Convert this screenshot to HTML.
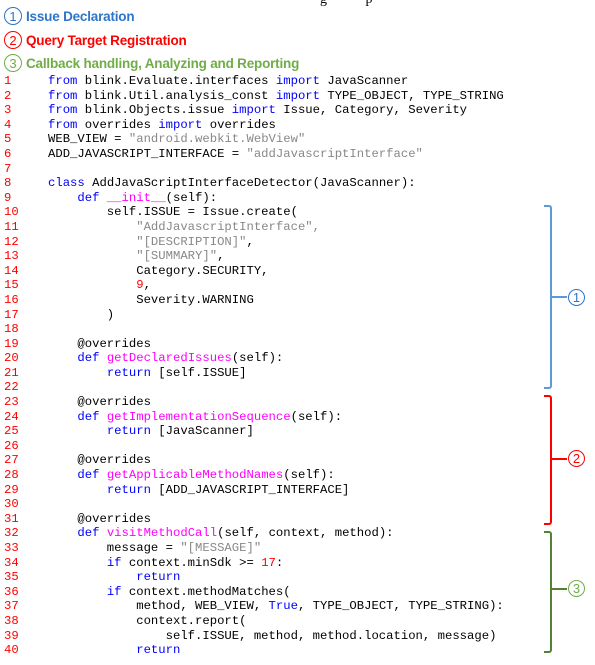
<!DOCTYPE html>
<html><head><style>
body{margin:0;width:595px;height:665px;background:#fff;position:relative;overflow:hidden}
.h{position:absolute;left:4px;height:20px;display:flex;align-items:center;font:bold 13.5px "Liberation Sans",sans-serif;white-space:nowrap;letter-spacing:-0.2px}
.c{display:flex;align-items:center;justify-content:center;width:18px;height:18px;border:1.5px solid;border-radius:50%;font-size:13px;font-weight:normal;box-sizing:border-box;margin-right:4px;letter-spacing:0}
pre{position:absolute;left:0;top:74px;margin:0;font:12.25px/14.6px "Liberation Mono",monospace;color:#000}
.n{color:#f00;display:inline-block;width:48px;padding-left:4px;box-sizing:border-box}
.k{color:#00f}.f{color:#f0f}.s{color:#888}.r{color:#f00}
.b{position:absolute;width:6px;border:2px solid;border-left:none;border-radius:0 3px 3px 0}
.t{position:absolute;height:2px;width:16px}
.cc{position:absolute;width:17px;height:17px;border:1.5px solid;border-radius:50%;display:flex;align-items:center;justify-content:center;font:13px "Liberation Sans",sans-serif;box-sizing:border-box}
</style></head><body>
<div style="position:absolute;left:320px;top:-8px;font:14px 'Liberation Serif',serif">g&nbsp;&nbsp;&nbsp;&nbsp;&nbsp;&nbsp;&nbsp;&nbsp;&nbsp;&nbsp;&nbsp;p</div>
<div class="h" style="top:6px;color:#2e75c8"><span class="c">1</span>Issue Declaration</div>
<div class="h" style="top:30px;color:#f00"><span class="c">2</span>Query Target Registration</div>
<div class="h" style="top:53px;color:#70ad47"><span class="c">3</span>Callback handling, Analyzing and Reporting</div>
<pre><span class="n">1</span><span class="k">from</span> blink.Evaluate.interfaces <span class="k">import</span> JavaScanner
<span class="n">2</span><span class="k">from</span> blink.Util.analysis_const <span class="k">import</span> TYPE_OBJECT, TYPE_STRING
<span class="n">3</span><span class="k">from</span> blink.Objects.issue <span class="k">import</span> Issue, Category, Severity
<span class="n">4</span><span class="k">from</span> overrides <span class="k">import</span> overrides
<span class="n">5</span>WEB_VIEW = <span class="s">"android.webkit.WebView"</span>
<span class="n">6</span>ADD_JAVASCRIPT_INTERFACE = <span class="s">"addJavascriptInterface"</span>
<span class="n">7</span>
<span class="n">8</span><span class="k">class</span> AddJavaScriptInterfaceDetector(JavaScanner):
<span class="n">9</span>    <span class="k">def</span> <span class="f">__init__</span>(self):
<span class="n">10</span>        self.ISSUE = Issue.create(
<span class="n">11</span>            <span class="s">"AddJavascriptInterface",</span>
<span class="n">12</span>            <span class="s">"[DESCRIPTION]"</span>,
<span class="n">13</span>            <span class="s">"[SUMMARY]"</span>,
<span class="n">14</span>            Category.SECURITY,
<span class="n">15</span>            <span class="r">9</span>,
<span class="n">16</span>            Severity.WARNING
<span class="n">17</span>        )
<span class="n">18</span>
<span class="n">19</span>    @overrides
<span class="n">20</span>    <span class="k">def</span> <span class="f">getDeclaredIssues</span>(self):
<span class="n">21</span>        <span class="k">return</span> [self.ISSUE]
<span class="n">22</span>
<span class="n">23</span>    @overrides
<span class="n">24</span>    <span class="k">def</span> <span class="f">getImplementationSequence</span>(self):
<span class="n">25</span>        <span class="k">return</span> [JavaScanner]
<span class="n">26</span>
<span class="n">27</span>    @overrides
<span class="n">28</span>    <span class="k">def</span> <span class="f">getApplicableMethodNames</span>(self):
<span class="n">29</span>        <span class="k">return</span> [ADD_JAVASCRIPT_INTERFACE]
<span class="n">30</span>
<span class="n">31</span>    @overrides
<span class="n">32</span>    <span class="k">def</span> <span class="f">visitMethodCall</span>(self, context, method):
<span class="n">33</span>        message = <span class="s">"[MESSAGE]"</span>
<span class="n">34</span>        <span class="k">if</span> context.minSdk &gt;= <span class="r">17</span>:
<span class="n">35</span>            <span class="k">return</span>
<span class="n">36</span>        <span class="k">if</span> context.methodMatches(
<span class="n">37</span>            method, WEB_VIEW, <span class="k">True</span>, TYPE_OBJECT, TYPE_STRING):
<span class="n">38</span>            context.report(
<span class="n">39</span>                self.ISSUE, method, method.location, message)
<span class="n">40</span>            <span class="k">return</span></pre>
<div class="b" style="left:544px;top:205px;height:180px;border-color:#5b9bd5"></div>
<div class="t" style="left:551px;top:296px;background:#5b9bd5"></div>
<div class="cc" style="left:568px;top:289px;color:#2e75c8">1</div>
<div class="b" style="left:544px;top:395px;height:126px;border-color:#f00"></div>
<div class="t" style="left:551px;top:458px;background:#f00"></div>
<div class="cc" style="left:568px;top:450px;color:#f00">2</div>
<div class="b" style="left:544px;top:531px;height:118px;border-color:#548235"></div>
<div class="t" style="left:551px;top:588px;background:#548235"></div>
<div class="cc" style="left:568px;top:580px;color:#70ad47">3</div>
</body></html>
